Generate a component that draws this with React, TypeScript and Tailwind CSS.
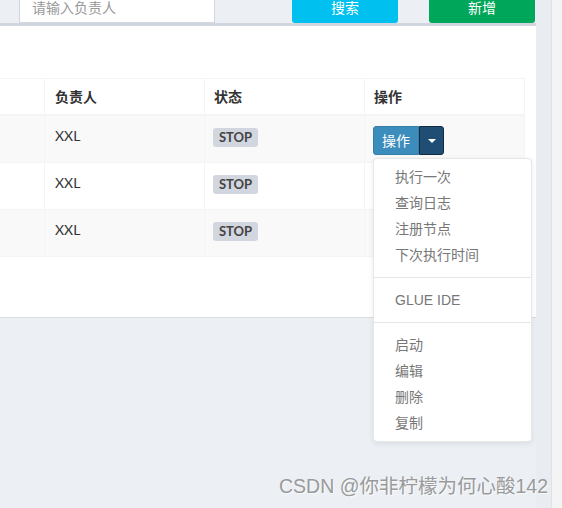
import { useState } from "react";

const rows = [
  { owner: "XXL", status: "STOP" },
  { owner: "XXL", status: "STOP" },
  { owner: "XXL", status: "STOP" },
];

const menuGroups = [
  ["执行一次", "查询日志", "注册节点", "下次执行时间"],
  ["GLUE IDE"],
  ["启动", "编辑", "删除", "复制"],
];

function ActionMenu() {
  return (
    <div className="absolute left-0 top-full mt-[3px] w-[159px] rounded-[4px] border border-[#e6e6e6] bg-white py-[5px] shadow-[0_2px_6px_rgba(0,0,0,0.08)] z-10">
      {menuGroups.map((group, gi) => (
        <div key={gi}>
          {gi > 0 && <div className="my-[9px] h-px bg-[#e5e5e5]" />}
          {group.map((item) => (
            <div
              key={item}
              className="h-[26px] pl-[21px] pr-[20px] text-[14px] leading-[26px] text-[#777] font-['Liberation_Sans','Noto_Sans_CJK_SC',sans-serif]"
            >
              {item}
            </div>
          ))}
        </div>
      ))}
    </div>
  );
}

export default function App() {
  const [open] = useState(true);

  return (
    <div className="relative flex h-[508px] w-[562px] overflow-hidden bg-[#ecf0f5] font-['Lato','Noto_Sans_CJK_SC',sans-serif] text-[#333]">
      <div className="flex w-[536px] flex-col">
        {/* search bar */}
        <div className="flex h-[23px] items-start">
          <div className="ml-[19px] h-[23px] w-[196px] border-x border-b border-[#d2d6de] bg-white pl-[12px] text-[14px] leading-[16px] text-[#999] font-['Liberation_Sans','Noto_Sans_CJK_SC',sans-serif]">
            请输入负责人
          </div>
          <button className="ml-[77px] h-[23px] w-[106px] rounded-b-[3px] bg-[#00c0ef] pb-[8px] text-center text-[14px] leading-[15px] text-white font-['Noto_Sans_CJK_SC',sans-serif]">
            搜索
          </button>
          <button className="ml-[31px] h-[23px] w-[106px] rounded-b-[3px] bg-[#00a65a] pb-[8px] text-center text-[14px] leading-[15px] text-white font-['Noto_Sans_CJK_SC',sans-serif]">
            新增
          </button>
        </div>

        {/* card */}
        <div className="h-[295px] border-t-[3px] border-b border-t-[#d2d6de] border-b-[#d9dde3] bg-white pt-[52px]">
          <div className="w-[525px] border-t border-[#f4f4f4]">
            <div className="grid h-[37px] grid-cols-[45px_160px_160px_160px] border-b-2 border-[#f4f4f4] text-[14px] font-bold">
              <div className="border-r border-[#f4f4f4]" />
              <div className="flex items-center border-r border-[#f4f4f4] px-[10px]">负责人</div>
              <div className="flex items-center border-r border-[#f4f4f4] px-[9px]">状态</div>
              <div className="flex items-center border-r border-[#f4f4f4] px-[9px]">操作</div>
            </div>
            {rows.map((row, i) => (
              <div
                key={i}
                className={`grid h-[47px] grid-cols-[45px_160px_160px_160px] border-b border-[#f4f4f4] text-[14px] ${
                  i % 2 === 0 ? "bg-[#f9f9f9]" : "bg-white"
                }`}
              >
                <div className="border-r border-[#f4f4f4]" />
                <div className="border-r border-[#f4f4f4] px-[10px] pt-[10px] leading-[20px]">{row.owner}</div>
                <div className="border-r border-[#f4f4f4] px-[8px] pt-[12px]">
                  <div className="flex h-[19px] w-[45px] items-center justify-center rounded-[3px] bg-[#d2d6de] text-[13px] font-bold text-[#444]">
                    {row.status}
                  </div>
                </div>
                <div className="relative border-r border-[#f4f4f4] px-[8px] pt-[10px]">
                  {i === 0 && (
                    <div className="relative flex">
                      <button className="flex h-[29px] w-[46px] items-center justify-center rounded-l-[3px] border border-[#367fa9] bg-[#3c8dbc] text-[14px] text-white font-['Noto_Sans_CJK_SC',sans-serif]">
                        操作
                      </button>
                      <button className="flex h-[29px] w-[25px] items-center justify-center rounded-r-[3px] border border-[#122b40] bg-[#204d74]">
                        <span className="h-0 w-0 border-x-[4px] border-t-[4px] border-x-transparent border-t-white" />
                      </button>
                      {open && <ActionMenu />}
                    </div>
                  )}
                </div>
              </div>
            ))}
          </div>
        </div>
      </div>

      {/* right gutter and scrollbar */}
      <div className="w-[15px] bg-[#e9edf2]" />
      <div className="w-[11px] border-l border-[#dfe2e6] bg-[#f4f4f4]" />

      <div className="absolute bottom-[7px] right-[14px] text-[19.5px] text-[#9a9a9a] [text-shadow:1px_1px_0_rgba(255,255,255,0.7)] font-['Liberation_Sans','Noto_Sans_CJK_SC',sans-serif]">
        CSDN @你非柠檬为何心酸142
      </div>
    </div>
  );
}
